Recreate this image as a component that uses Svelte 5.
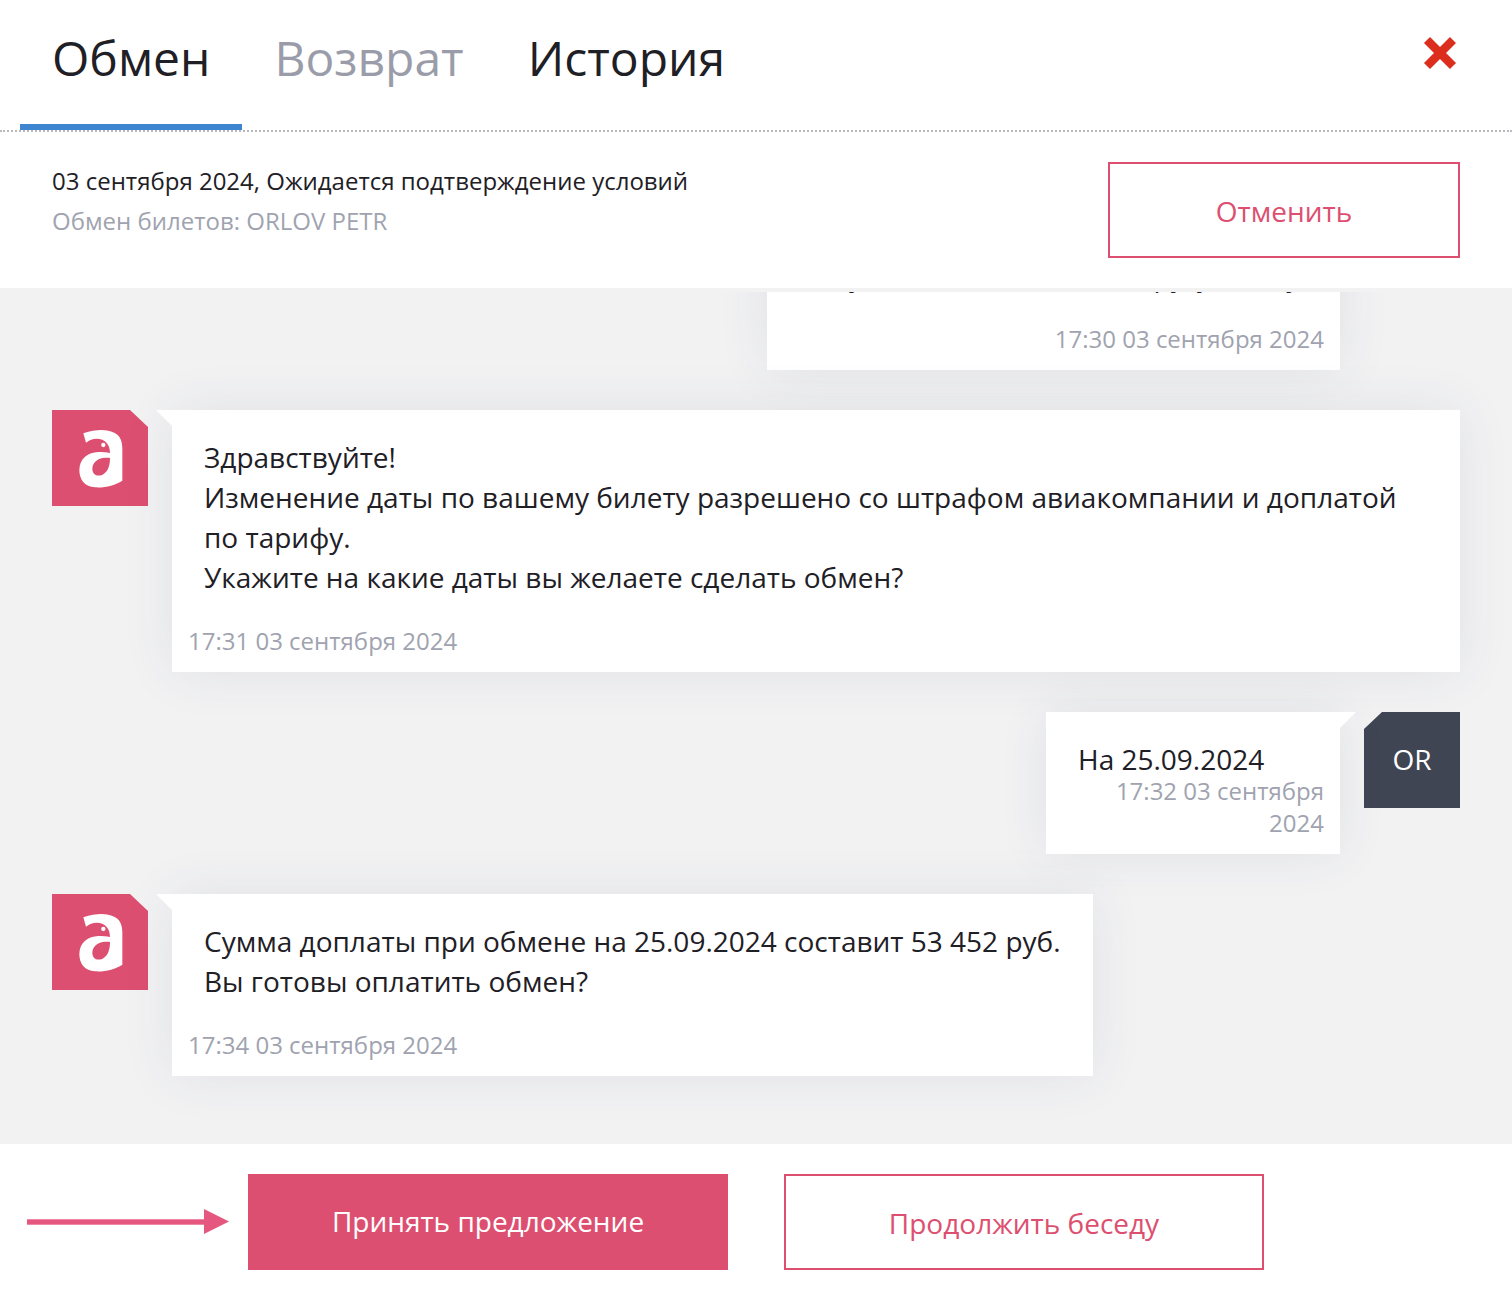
<script>
  const tabs = [
    { label: 'Обмен', active: true },
    { label: 'Возврат', muted: true },
    { label: 'История' }
  ];

  const messages = [
    {
      mine: true,
      cls: 'first',
      lines: ['Добрый день!', 'Подскажите, пожалуйста,', 'Хочу обменять билет на другую дату'],
      time: '17:30 03 сентября 2024'
    },
    {
      lines: [
        'Здравствуйте!',
        'Изменение даты по вашему билету разрешено со штрафом авиакомпании и доплатой по тарифу.',
        'Укажите на какие даты вы желаете сделать обмен?'
      ],
      cls: 'wide',
      time: '17:31 03 сентября 2024'
    },
    {
      mine: true,
      cls: 'short',
      lines: ['На 25.09.2024'],
      time: '17:32 03 сентября 2024'
    },
    {
      lines: ['Сумма доплаты при обмене на 25.09.2024 составит 53 452 руб.', 'Вы готовы оплатить обмен?'],
      time: '17:34 03 сентября 2024'
    }
  ];
</script>

<div class="page">
  <header class="tabs">
    {#each tabs as tab}
      <div class="tab" class:active={tab.active} class:muted={tab.muted}>{tab.label}</div>
    {/each}
    <svg class="close" width="34" height="34" viewBox="0 0 34 34" aria-label="Закрыть">
      <path d="M4 4 L30 30 M30 4 L4 30" stroke="#dc2e1c" stroke-width="8.5" fill="none" />
    </svg>
  </header>

  <section class="info">
    <div class="info-text">
      <div>03 сентября 2024, Ожидается подтверждение условий</div>
      <div class="info-sub">Обмен билетов: ORLOV PETR</div>
    </div>
    <button class="btn outline cancel">Отменить</button>
  </section>

  <main class="chat">
    <div class="scroll">
      {#each messages as msg}
        <div class="row" class:mine={msg.mine}>
          <div class="avatar" class:user={msg.mine}>
            {#if msg.mine}
              OR
            {:else}
              <svg width="96" height="96" viewBox="-24 -30 288 288">
                <path
                  fill="#fff"
                  fill-rule="evenodd"
                  d="M70 40 C100 30 125 28 145 32 C175 38 187 55 187 85 L187 182 C165 196 135 204 105 202 C75 200 58 180 58 150 C58 115 85 97 115 96 C128 96 140 97 150 99 C150 72 135 57 110 56 C98 56 88 60 78 68 Z M97 146 C97 130 112 116 128 114 C138 113 148 113 150 114 C150 135 145 155 128 164 C110 171 97 163 97 146 Z"
                />
                <circle cx="130" cy="75" r="6.5" fill="#fff" />
              </svg>
            {/if}
          </div>
          <div class="bubble {msg.cls ?? ''}">
            <div class="text">
              {#each msg.lines as line}
                <div>{line}</div>
              {/each}
            </div>
            <div class="time">{msg.time}</div>
          </div>
        </div>
      {/each}
    </div>
  </main>

  <footer class="actions">
    <svg class="arrow" width="248" height="96" viewBox="0 0 248 96">
      <rect x="27" y="45.3" width="178" height="5.4" fill="#e5577f" />
      <path d="M204 35 L229 47.5 L204 60 Z" fill="#e5577f" />
    </svg>
    <button class="btn solid">Принять предложение</button>
    <button class="btn outline">Продолжить беседу</button>
  </footer>
</div>

<style>
  :global(body) {
    margin: 0;
    font-family: "Open Sans", "Noto Sans", sans-serif;
    color: #1e2026;
  }
  .page {
    width: 1512px;
    height: 1294px;
    display: flex;
    flex-direction: column;
    background: #fff;
    overflow: hidden;
  }
  .tabs {
    display: flex;
    flex: none;
    height: 132px;
    padding-left: 20px;
    box-sizing: border-box;
    border-bottom: 2px dotted #b9b9be;
  }
  .tab {
    height: 130px;
    box-sizing: border-box;
    padding: 26px 32px 0;
    font-size: 48px;
    line-height: 64px;
  }
  .tab.active {
    border-bottom: 6px solid #3d85d0;
  }
  .tab.muted {
    color: #9a9da9;
  }
  .close {
    margin: 36px 55px 0 auto;
  }
  .info {
    flex: none;
    display: flex;
    justify-content: space-between;
    padding: 30px 52px;
    font-size: 24px;
    line-height: 40px;
  }
  .info-text {
    margin-top: -1px;
  }
  .info-sub {
    color: #a0a3af;
  }
  .btn {
    font-family: inherit;
    font-size: 28px;
    width: 480px;
    height: 96px;
    box-sizing: border-box;
    border-radius: 0;
    padding: 0;
  }
  .btn.solid {
    background: #dd4f70;
    border: 0;
    color: #fff;
    margin-right: 56px;
    padding-bottom: 2px;
  }
  .btn.outline {
    background: #fff;
    border: 2px solid #dd4f70;
    color: #dd4f70;
    padding-top: 2px;
  }
  .btn.cancel {
    width: 352px;
  }
  .chat {
    flex: 1;
    min-height: 0;
    display: flex;
    background: #f2f2f3;
    padding-top: 4px;
  }
  .scroll {
    flex: 1;
    min-height: 0;
    overflow: hidden;
    display: flex;
    flex-direction: column;
    justify-content: flex-end;
    gap: 40px;
    padding: 0 52px 68px;
  }
  .row {
    flex: none;
    display: flex;
    align-items: flex-start;
    gap: 24px;
  }
  .row.mine {
    flex-direction: row-reverse;
  }
  .avatar {
    flex: none;
    width: 96px;
    height: 96px;
    background: #dd4f70;
    clip-path: polygon(0 0, 78px 0, 96px 17px, 96px 96px, 0 96px);
    display: flex;
    align-items: center;
    justify-content: center;
    color: #fff;
    font-size: 28px;
  }
  .avatar.user {
    background: #404554;
    clip-path: polygon(18px 0, 96px 0, 96px 96px, 0 96px, 0 17px);
    padding-bottom: 2px;
    box-sizing: border-box;
  }
  .bubble {
    position: relative;
    background: #fff;
    box-shadow: 0 0 50px rgba(60, 70, 100, 0.09);
    padding: 27px 32px 15px;
    box-sizing: border-box;
  }
  .bubble::before {
    content: "";
    position: absolute;
    top: 0;
    left: -16px;
    width: 16px;
    height: 16px;
    background: #fff;
    clip-path: polygon(0 0, 100% 0, 100% 100%);
  }
  .mine .bubble::before {
    left: auto;
    right: -16px;
    clip-path: polygon(0 0, 100% 0, 0 100%);
  }
  .bubble.wide {
    flex: 1;
  }
  .bubble.first {
    width: 573px;
  }
  .bubble.short {
    width: 294px;
  }
  .text {
    font-size: 28px;
    line-height: 40px;
  }
  .time {
    margin: 28px -16px 0;
    font-size: 24px;
    line-height: 32px;
    color: #a0a3af;
  }
  .mine .time {
    text-align: right;
  }
  .short .time {
    margin-top: -4px;
  }
  .actions {
    flex: none;
    display: flex;
    align-items: center;
    height: 150px;
    box-sizing: border-box;
    padding-top: 6px;
  }
  .arrow {
    flex: none;
  }
</style>
